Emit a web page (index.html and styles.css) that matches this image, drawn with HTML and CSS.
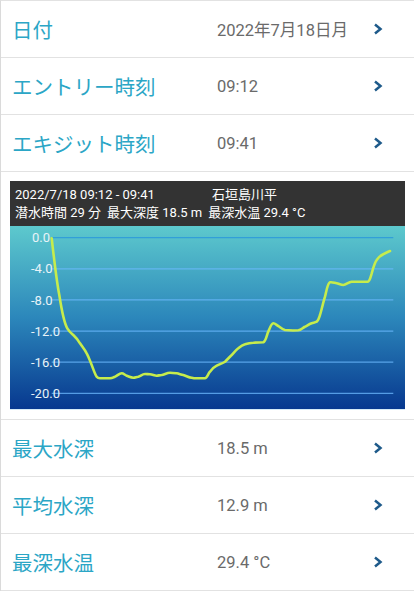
FILE: index.html
```html
<!DOCTYPE html>
<html lang="ja">
  <head>
    <meta charset="UTF-8" />
    <meta name="viewport" content="width=device-width, initial-scale=1.0" />
    <title>ダイブログ</title>
    <link rel="stylesheet" href="styles.css">
  </head>
  <body>
    <div class="log">
      <div class="row">
        <span class="label">日付</span>
        <span class="value">2022年7月18日月</span>
        <svg class="chevron" viewBox="0 0 10 12"><path d="M2 1.5 L7.5 6 L2 10.5" /></svg>
      </div>
      <div class="row">
        <span class="label">エントリー時刻</span>
        <span class="value">09:12</span>
        <svg class="chevron" viewBox="0 0 10 12"><path d="M2 1.5 L7.5 6 L2 10.5" /></svg>
      </div>
      <div class="row">
        <span class="label">エキジット時刻</span>
        <span class="value">09:41</span>
        <svg class="chevron" viewBox="0 0 10 12"><path d="M2 1.5 L7.5 6 L2 10.5" /></svg>
      </div>

      <div class="chart-section">
        <div class="chart-card">
          <div class="chart-head">
            <div class="head-line">
              <span class="head-date">2022/7/18 09:12 - 09:41</span>
              <span>石垣島川平</span>
            </div>
            <div class="head-line stats">
              <span>潜水時間 29 分</span>
              <span>最大深度 18.5 m</span>
              <span>最深水温 29.4 °C</span>
            </div>
          </div>
          <div class="chart-body">
            <svg class="depth" viewBox="0 0 395 183" width="395" height="183">
              <g class="grid">
                <line class="grid-top" x1="41.7" y1="11.7" x2="383.3" y2="11.7" />
                <line x1="41.7" y1="42.8" x2="383.3" y2="42.8" />
                <line x1="41.7" y1="73.9" x2="383.3" y2="73.9" />
                <line x1="41.7" y1="105.1" x2="383.3" y2="105.1" />
                <line x1="41.7" y1="136.2" x2="383.3" y2="136.2" />
                <line x1="41.7" y1="167.3" x2="383.3" y2="167.3" />
              </g>
              <g class="axis">
                <text x="22" y="16.3">0.0</text>
                <text x="21" y="47.4">-4.0</text>
                <text x="21" y="78.5">-8.0</text>
                <text x="21" y="109.7">-12.0</text>
                <text x="21" y="140.8">-16.0</text>
                <text x="21" y="171.9">-20.0</text>
              </g>
              <!-- depth profile, smoothed by hand -->
              <path class="profile" d="M41.7,12.3 C43.5,28 46.5,55 49.3,69 C51,80 53.5,96 57.3,102.3 C59.5,106 61,107 63.3,109 C66,111.5 68,114 70,117.3 C72.5,121 75,124 76.7,127.3 C79,131.5 80,135 81.7,139 C83.5,143.5 85,148.5 86.7,150.7 C87.5,151.8 88.5,152.3 90,152.3 L100,152.3 C102.5,152.3 103,151.5 105,150.7 C107.5,149.5 109.5,147.3 111.7,147.3 C113.7,147.3 114.7,149 116.7,149.7 C119,150.5 121,151.7 123.3,151.7 C125.5,151.7 126.5,150.7 128.3,150.7 C130.5,150 132.5,148 135,148 C137,148 138,148.3 140,148.3 C142.5,148.5 144.5,149.7 146.7,149.7 C148.5,149.7 149.5,149 151.7,149 C154.5,148.5 157,146.7 160,146.7 C162.5,146.7 164.5,147 166.7,147.3 C169,147.8 171,148.5 173.3,149 C176.5,150 179,151.5 181.7,151.7 C183.5,152.2 185,152.3 186.7,152.3 L195,152.3 C197,152.3 198,148 200,145.7 C202,143 204,141 206.7,139.7 C209.5,138 212.5,137.5 215,135.7 C217.5,133.5 219.5,131 221.7,129 C224,126.5 226,124 228.3,122.3 C230.5,120.5 232.5,119 235,118.3 C238,117.2 240.5,116.7 243.3,116.7 L253.3,116.3 C256,115 256.8,108.5 258.3,105.7 C259.6,102.5 261.3,97.3 263.3,97.3 C265,97.3 266.5,99 268.3,100 C270.5,101.5 272.5,103.6 275,104 C279,104.5 284.5,104.5 288.3,104.3 C291,104 292.8,101.7 295,100.7 C297.3,99.5 299.5,98 301.7,97.3 C303.5,96.7 305.3,96.5 306.7,95.7 C308.3,94.5 309,92 310,89 C311.8,83 313.3,76 315,70.7 C316.5,65 317.5,57 320,56.3 C322.5,55.8 324.5,57 326.7,57.3 C329,57.8 331,59 333.3,59 C336,59 338.5,55.9 341.7,55.7 L357.7,55.7 C359.8,55.5 360.7,50.5 361.7,47.3 C363,42.5 364.5,37 366.7,34 C368.7,31 370.5,29.5 373.3,28.3 C375.5,27 377.5,25.8 380,25" />
            </svg>
          </div>
        </div>
      </div>

      <div class="row">
        <span class="label">最大水深</span>
        <span class="value">18.5 m</span>
        <svg class="chevron" viewBox="0 0 10 12"><path d="M2 1.5 L7.5 6 L2 10.5" /></svg>
      </div>
      <div class="row">
        <span class="label">平均水深</span>
        <span class="value">12.9 m</span>
        <svg class="chevron" viewBox="0 0 10 12"><path d="M2 1.5 L7.5 6 L2 10.5" /></svg>
      </div>
      <div class="row">
        <span class="label">最深水温</span>
        <span class="value">29.4 °C</span>
        <svg class="chevron" viewBox="0 0 10 12"><path d="M2 1.5 L7.5 6 L2 10.5" /></svg>
      </div>
    </div>
  </body>
</html>
```

FILE: styles.css
```css
:root {
  --label-color: #2ba6c6;
  --value-color: #6a6a6a;
  --chevron-color: #1e5a8a;
  --line-color: #e2e2e2;
  --head-color: #333333;
  --font-family: Roboto, "Noto Sans CJK JP", sans-serif;
}

body {
  margin: 0;
  font-family: var(--font-family);
  background-color: #fff;
}

.log {
  width: 413px;
  border-left: 1px solid #dadada;
  border-top: 1px solid var(--line-color);
}

.row {
  display: grid;
  grid-template-columns: 205px 1fr auto;
  align-items: center;
  height: 56px;
  padding: 0 31px 0 11px;
  border-bottom: 1px solid var(--line-color);
}

.label {
  font-size: 20.5px;
  color: var(--label-color);
  white-space: nowrap;
}

.value {
  font-size: 16.5px;
  color: var(--value-color);
}

.chevron {
  width: 10px;
  height: 12px;
}

.chevron path {
  fill: none;
  stroke: var(--chevron-color);
  stroke-width: 2.5;
}

.chart-section {
  padding: 9px;
  border-bottom: 1px solid var(--line-color);
}

.chart-card {
  width: 395px;
  border-bottom: 1px solid #d6eaf7;
}

.chart-head {
  background-color: var(--head-color);
  color: #fff;
  font-size: 13px;
  line-height: 17.5px;
  padding: 5px 5px;
  height: 35px;
}

.head-line {
  display: flex;
  white-space: nowrap;
}

.head-date {
  width: 197px;
}

.stats {
  gap: 6px;
}

.chart-body {
  height: 183px;
  background: linear-gradient(#5dc9cd, #2c87bb 50%, #07388f);
}

.depth {
  display: block;
}

.grid line {
  stroke: rgba(110, 185, 255, 0.75);
  stroke-width: 1.2;
}

.grid .grid-top {
  stroke: rgba(40, 150, 220, 0.8);
}

.axis text {
  font-family: var(--font-family);
  font-size: 13px;
  fill: #e8f3f8;
}

.profile {
  fill: none;
  stroke: #c6ec4c;
  stroke-width: 2.6;
  stroke-linejoin: round;
  stroke-linecap: round;
}
```
